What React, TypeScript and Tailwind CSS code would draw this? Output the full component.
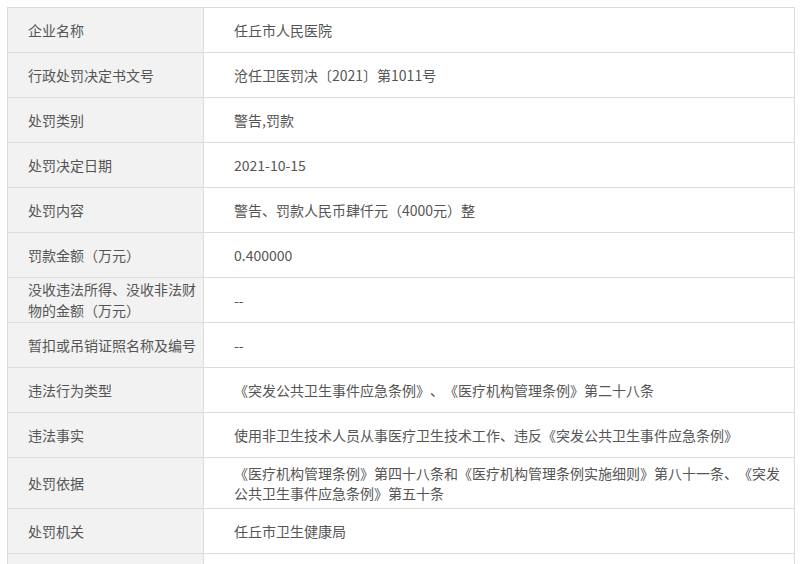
const rows: { label: string; value: string }[] = [
  { label: '企业名称', value: '任丘市人民医院' },
  { label: '行政处罚决定书文号', value: '沧任卫医罚决〔2021〕第1011号' },
  { label: '处罚类别', value: '警告,罚款' },
  { label: '处罚决定日期', value: '2021-10-15' },
  { label: '处罚内容', value: '警告、罚款人民币肆仟元（4000元）整' },
  { label: '罚款金额（万元）', value: '0.400000' },
  { label: '没收违法所得、没收非法财物的金额（万元）', value: '--' },
  { label: '暂扣或吊销证照名称及编号', value: '--' },
  { label: '违法行为类型', value: '《突发公共卫生事件应急条例》、《医疗机构管理条例》第二十八条' },
  { label: '违法事实', value: '使用非卫生技术人员从事医疗卫生技术工作、违反《突发公共卫生事件应急条例》' },
  {
    label: '处罚依据',
    value: '《医疗机构管理条例》第四十八条和《医疗机构管理条例实施细则》第八十一条、《突发公共卫生事件应急条例》第五十条',
  },
  { label: '处罚机关', value: '任丘市卫生健康局' },
  { label: '', value: '' },
]

export default function App() {
  return (
    <main
      className="min-h-screen bg-white pl-[7px] pt-[7px] pr-[9px] text-[14px] text-[#555] [text-spacing-trim:space-all]"
      style={{ fontFamily: '"Noto Sans CJK SC", "Noto Sans", sans-serif' }}
    >
      <div className="grid grid-cols-[196px_1fr] border-l border-t border-[#dcdcdc]">
        {rows.map((r, i) => (
          <div key={i} className="contents">
            <div className="flex min-h-[45px] items-center border-r border-b border-[#dcdcdc] bg-[#f2f2f2] pl-[20px] pr-[6px] leading-[21px]">
              {r.label}
            </div>
            <div className="flex min-h-[45px] items-center border-r border-b border-[#dcdcdc] py-[5px] pl-[30px] pr-[12px] leading-[20px]">
              {r.value}
            </div>
          </div>
        ))}
      </div>
    </main>
  )
}
